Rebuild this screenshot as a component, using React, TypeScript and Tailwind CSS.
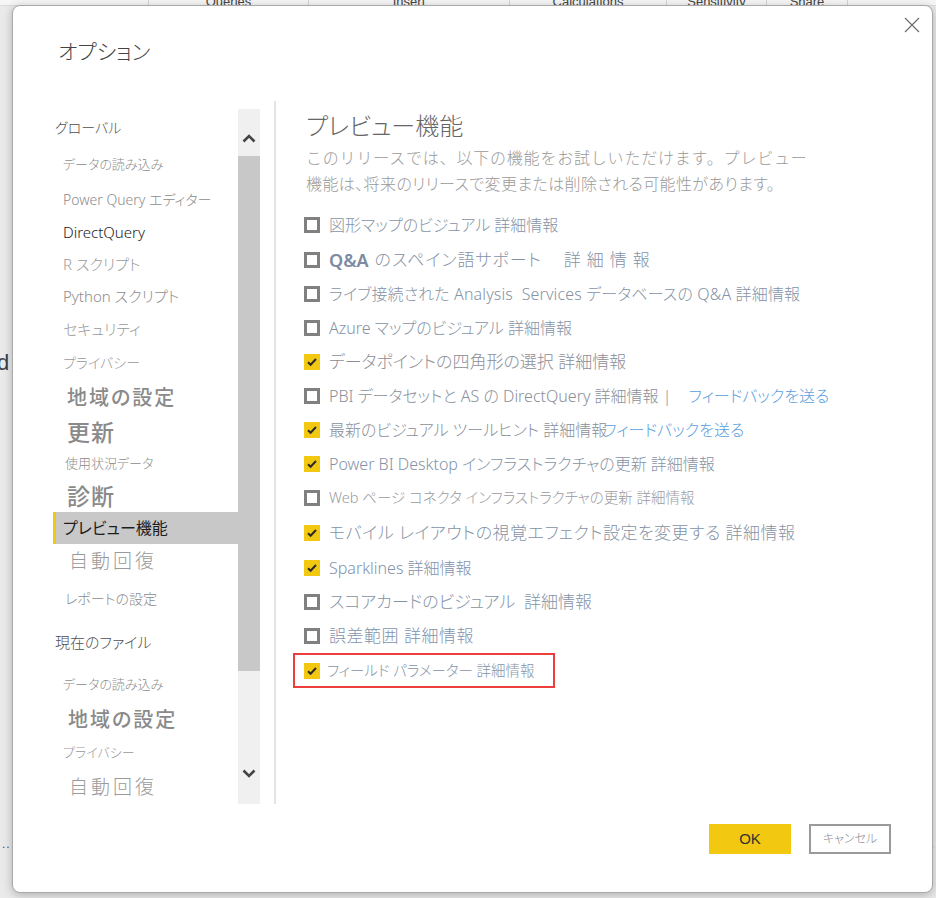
import { ReactNode } from "react";

const jp = "font-['Noto_Sans','Noto_Sans_CJK_JP',sans-serif] [font-feature-settings:'palt']";

type NavItem = { label: string; h: number; cls: string; selected?: boolean };

const navItems: NavItem[] = [
  { label: "グローバル", h: 37, cls: "pl-[2px] text-[14px] text-[#505050]" },
  { label: "データの読み込み", h: 37, cls: "pl-[10px] text-[13px] text-[#8c8c8c]" },
  { label: "Power Query エディター", h: 33, cls: "pl-[10px] text-[14px] text-[#8c8c8c]" },
  { label: "DirectQuery", h: 33, cls: "pl-[10px] text-[15px] text-[#222222]" },
  { label: "R スクリプト", h: 31, cls: "pl-[10px] text-[15px] text-[#999999]" },
  { label: "Python スクリプト", h: 33, cls: "pl-[10px] text-[15px] text-[#8c8c8c]" },
  { label: "セキュリティ", h: 32, cls: "pl-[10px] text-[15px] text-[#999999]" },
  { label: "プライバシー", h: 35, cls: "pl-[10px] text-[14px] text-[#999999]" },
  { label: "地域の設定", h: 36, cls: "pl-[14px] text-[20px] font-medium tracking-[2px] text-[#8a8a8a]" },
  { label: "更新", h: 32, cls: "pl-[14px] text-[23px] font-medium tracking-[1px] text-[#8a8a8a]" },
  { label: "使用状況データ", h: 32, cls: "pl-[12px] text-[13px] text-[#8c8c8c]" },
  { label: "診断", h: 32, cls: "pl-[14px] text-[23px] font-medium tracking-[1px] text-[#8a8a8a]" },
  { label: "プレビュー機能", h: 32, cls: "pl-[7px] text-[16px] font-normal text-[#1e1e1e]", selected: true },
  { label: "自動回復", h: 34, cls: "pl-[16px] text-[19px] tracking-[3px] text-[#9a9a9a]" },
  { label: "レポートの設定", h: 41, cls: "pl-[12px] text-[14px] text-[#8c8c8c]" },
  { label: "現在のファイル", h: 47, cls: "pl-[2px] text-[15px] text-[#505050]" },
  { label: "データの読み込み", h: 37, cls: "pl-[10px] text-[13px] text-[#8c8c8c]" },
  { label: "地域の設定", h: 33, cls: "pl-[15px] text-[20px] font-medium tracking-[2px] text-[#8a8a8a]" },
  { label: "プライバシー", h: 33, cls: "pl-[10px] text-[13px] text-[#999999]" },
  { label: "自動回復", h: 36, cls: "pl-[16px] text-[19px] tracking-[3px] text-[#9a9a9a]" },
];

function Box({ checked }: { checked?: boolean }) {
  if (checked) {
    return (
      <span className="flex h-4 w-4 shrink-0 items-center justify-center bg-[#f2c811]">
        <svg width="12" height="12" viewBox="0 0 12 12" fill="none">
          <path d="M2 6.2l2.6 2.6L10 3" stroke="#2b2b2b" strokeWidth="2" />
        </svg>
      </span>
    );
  }
  return <span className="h-4 w-4 shrink-0 border-[3px] border-[#808080] bg-white" />;
}

function Row({ h, checked, children }: { h: number; checked?: boolean; children: ReactNode }) {
  return (
    <div className="-ml-[2px] flex items-center gap-[9px]" style={{ height: h }}>
      <Box checked={checked} />
      <div className="flex items-center whitespace-nowrap text-[#8593a6]">{children}</div>
    </div>
  );
}

const link = "text-[#5a9ee0]";

export default function App() {
  return (
    <div className="relative h-[898px] w-[936px] overflow-hidden bg-[#eaeaea] font-['Liberation_Sans',sans-serif]">
      {/* ribbon behind the dialog */}
      <div className="flex h-[6px] overflow-hidden border-b border-[#dcdcdc] bg-[#f6f6f6] text-[13px] leading-[13px] text-[#444]">
        <div className="w-[149px] shrink-0 border-r border-[#d4d4d4]" />
        {[
          ["Queries", "w-[160px]"],
          ["Insert", "w-[201px]"],
          ["Calculations", "w-[157px]"],
          ["Sensitivity", "w-[100px]"],
          ["Share", "w-[81px]"],
        ].map(([t, w]) => (
          <div key={t} className={`${w} shrink-0 border-r border-[#d4d4d4] text-center`}>
            <div className="-mt-[5px]">{t}</div>
          </div>
        ))}
      </div>
      <div className="pt-[344px] text-[22px] leading-[26px] text-[#3b3f4a]">
        <span className="-ml-[3px]">d</span>
      </div>
      <div className="mt-[462px] flex justify-between px-[2px] text-[12px] leading-[12px] text-[#555]">
        <span className="tracking-[1px]">..</span>
        <span>.</span>
      </div>

      {/* dialog */}
      <div
        className={`absolute left-[12px] top-[5px] flex h-[888px] w-[921px] flex-col rounded-[8px] border border-[#a9a9a9] bg-white font-light shadow-[0_2px_10px_rgba(0,0,0,0.25)] ${jp}`}
      >
        <button className="absolute left-[891px] top-[11px] h-4 w-4">
          <svg width="16" height="16" viewBox="0 0 16 16" fill="none">
            <path d="M1 1l14 14M15 1L1 15" stroke="#6e6e6e" strokeWidth="1.2" />
          </svg>
        </button>

        <h1 className="ml-[45px] mt-[30px] h-[30px] text-[21px] leading-[30px] text-[#444]">オプション</h1>

        <div className="mt-[35px] flex h-[703px] pl-[40px]">
          <nav className="mt-[8px] w-[185px] shrink-0">
            {navItems.map((n, i) => (
              <div key={i} className="flex items-center" style={{ height: n.h }}>
                {n.selected ? (
                  <div className={`flex h-full w-full items-center border-l-[3px] border-[#f2c811] bg-[#c8c8c8] ${n.cls}`}>
                    {n.label}
                  </div>
                ) : (
                  <span className={`whitespace-nowrap ${n.cls}`}>{n.label}</span>
                )}
              </div>
            ))}
          </nav>

          <div className="mt-[8px] flex h-[695px] w-[22px] shrink-0 flex-col bg-[#f0f0f0]">
            <div className="flex h-[47px] items-center justify-center pt-[12px]">
              <svg width="14" height="9" viewBox="0 0 14 9" fill="none">
                <path d="M1.5 7.5L7 2l5.5 5.5" stroke="#444" strokeWidth="2.6" />
              </svg>
            </div>
            <div className="h-[515px] bg-[#c8c8c8]" />
            <div className="flex flex-1 items-end justify-center pb-[26px]">
              <svg width="14" height="9" viewBox="0 0 14 9" fill="none">
                <path d="M1.5 1.5L7 7l5.5-5.5" stroke="#444" strokeWidth="2.6" />
              </svg>
            </div>
          </div>

          <div className="ml-[14px] w-[2px] shrink-0 bg-[#e4e4e4]" />

          <section className="pl-[30px] pt-[10px]">
            <h2 className="h-[30px] text-[24px] leading-[30px] text-[#666]">プレビュー機能</h2>
            <p className="mt-[4px] text-[16px] leading-[26px] text-[#9a9a9a]">
              <span className="tracking-[0.8px] [font-feature-settings:normal]">
                このリリースでは、以下の機能をお試しいただけます。プレビュー
              </span>
              <br />
              <span className="tracking-[0.4px]">機能は、将来のリリースで変更または削除される可能性があります。</span>
            </p>

            <div className="mt-[10px]">
              <Row h={36}>
                <span className="text-[16px]">図形マップのビジュアル 詳細情報</span>
              </Row>
              <Row h={34}>
                <span className="text-[18px] font-semibold text-[#7c8ba1]">Q&amp;A</span>
                <span className="ml-[6px] text-[17px] tracking-[1px]">のスペイン語サポート</span>
                <span className="ml-[22px] text-[17px] tracking-[6px]">詳細情報</span>
              </Row>
              <Row h={34}>
                <span className="text-[16px] tracking-[0.15px]">
                  ライブ接続された Analysis&nbsp; Services データベースの Q&amp;A 詳細情報
                </span>
              </Row>
              <Row h={34}>
                <span className="text-[16px]">Azure マップのビジュアル 詳細情報</span>
              </Row>
              <Row h={34} checked>
                <span className="text-[17px] text-[#8d8d95]">データポイントの四角形の選択 詳細情報</span>
              </Row>
              <Row h={34}>
                <span className="text-[16px] text-[#8a8f9a]">PBI データセットと AS の DirectQuery 詳細情報 |</span>
                <span className={`ml-[17px] text-[16px] ${link}`}>フィードバックを送る</span>
              </Row>
              <Row h={34} checked>
                <span className="text-[16px] text-[#8a8f9a]">最新のビジュアル ツールヒント 詳細情報</span>
                <span className={`-ml-[4px] text-[16px] ${link}`}>フィードバックを送る</span>
              </Row>
              <Row h={34} checked>
                <span className="text-[16px]">Power BI Desktop インフラストラクチャの更新 詳細情報</span>
              </Row>
              <Row h={34}>
                <span className="text-[14.5px] text-[#9a9aa0]">Web ページ コネクタ インフラストラクチャの更新 詳細情報</span>
              </Row>
              <Row h={35} checked>
                <span className="text-[17px] tracking-[0.5px]">モバイル レイアウトの視覚エフェクト設定を変更する 詳細情報</span>
              </Row>
              <Row h={35} checked>
                <span className="text-[16px] text-[#7f93ad]">Sparklines 詳細情報</span>
              </Row>
              <Row h={34}>
                <span className="text-[17px]">スコアカードのビジュアル&nbsp; 詳細情報</span>
              </Row>
              <Row h={33}>
                <span className="text-[17px] tracking-[0.5px] text-[#7f93ad]">誤差範囲 詳細情報</span>
              </Row>
              <div className="-ml-[13px] mt-[1px] flex h-[35px] w-[262px] items-center gap-[7px] border-2 border-[#ee3d3d] pl-[9px]">
                <Box checked />
                <span className="whitespace-nowrap text-[14.5px] text-[#8593a6]">フィールド パラメーター 詳細情報</span>
              </div>
            </div>
          </section>
        </div>

        <div className="mt-[20px] flex justify-end gap-[18px] pr-[41px]">
          <button className="h-[30px] w-[82px] bg-[#f2c811] font-['Liberation_Sans',sans-serif] text-[15px] font-normal text-[#333]">
            OK
          </button>
          <button className="h-[30px] w-[82px] border-2 border-[#9a9a9a] bg-white text-[12px] text-[#8c8c8c]">
            キャンセル
          </button>
        </div>
      </div>
    </div>
  );
}
